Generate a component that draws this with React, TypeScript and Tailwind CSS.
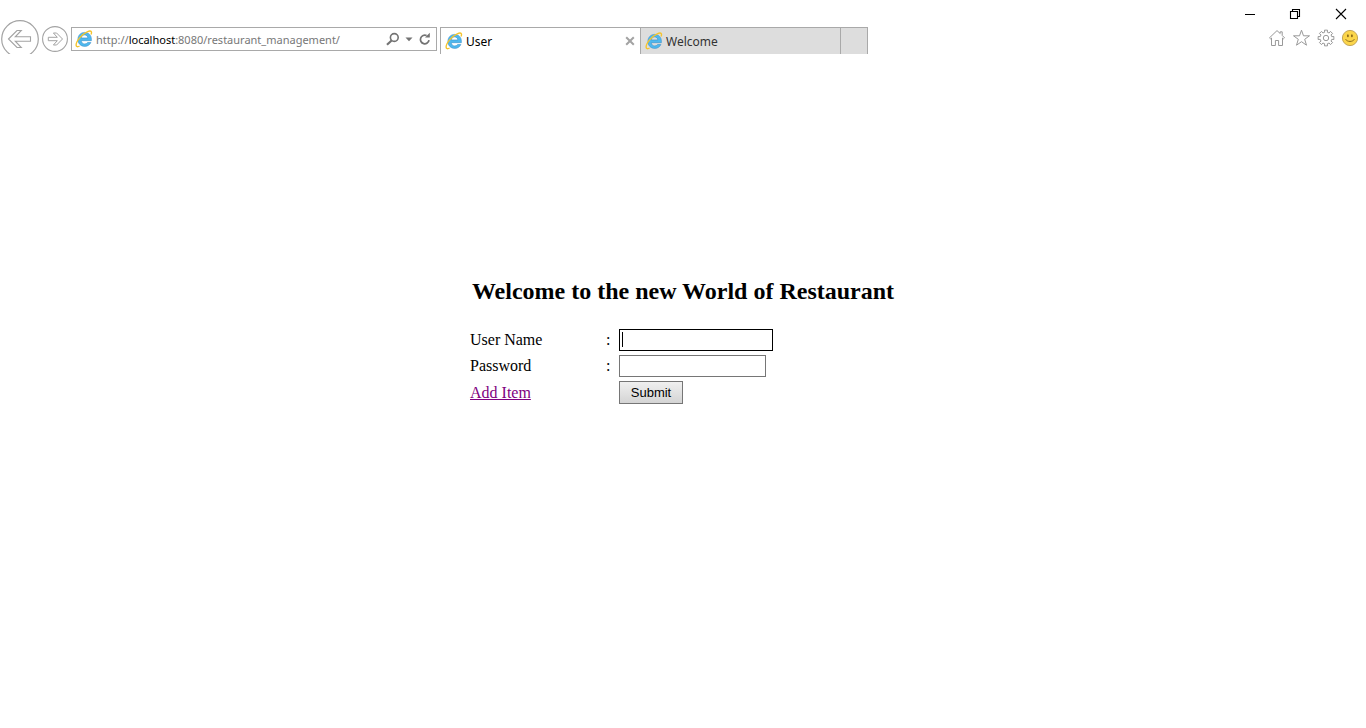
import React from 'react';

function IeLogo() {
  return (
    <svg width="18" height="18" viewBox="0 0 18 18" fill="none" aria-hidden="true" className="shrink-0">
      <path
        fillRule="evenodd"
        clipRule="evenodd"
        d="M9.6 2.4C13.7 2.4 16.4 5.2 16.4 9.2V10.7H6.2C6.4 12.6 7.8 13.9 9.8 13.9C11 13.9 12 13.4 12.6 12.5H15.9C14.9 14.9 12.7 16.4 9.7 16.4C5.7 16.4 2.9 13.5 2.9 9.4C2.9 5.3 5.7 2.4 9.6 2.4ZM6.3 7.9H12.8C12.6 6 11.4 4.9 9.6 4.9C7.9 4.9 6.6 6 6.3 7.9Z"
        fill="#4fb8ee"
        stroke="#2c86c4"
        strokeWidth="0.5"
      />
      <path
        d="M4.6 16C2.7 17.1 1.3 16.9 1.1 15.2C0.9 11.6 6.4 4.4 12.2 1.8C14.6 0.7 16.2 0.7 16.5 2.1C16.6 2.9 16.4 3.7 16 4.5"
        stroke="#f4c42e"
        strokeWidth="1.4"
      />
    </svg>
  );
}

function BackIcon() {
  return (
    <svg width="38" height="38" viewBox="0 0 38 38" fill="none" stroke="#a3a3a3" aria-hidden="true">
      <circle cx="19" cy="19" r="18.3" strokeWidth="1.2" />
      <path d="M7.5 19L16 10.5H20.3L14.3 16.8H29.5V21.2H14.3L20.3 27.5H16Z" strokeWidth="1.1" />
    </svg>
  );
}

function ForwardIcon() {
  return (
    <svg width="26" height="26" viewBox="0 0 26 26" fill="none" stroke="#a3a3a3" aria-hidden="true">
      <circle cx="13" cy="13" r="12.4" strokeWidth="1.1" />
      <path d="M20.5 13L14.6 7H11.4L15.3 11.3H6.3V14.7H15.3L11.4 19H14.6Z" />
    </svg>
  );
}

function AddressBar() {
  return (
    <div className="flex h-6 w-[366px] items-center border border-[#a9a9a9] bg-white px-[3px]">
      <IeLogo />
      <div
        role="textbox"
        aria-label="Address"
        contentEditable
        suppressContentEditableWarning
        spellCheck={false}
        className="ml-[3px] min-w-0 flex-1 whitespace-nowrap pt-0.5 text-[11px] text-[#777777] outline-none"
      >
        http://<span className="text-black">localhost</span>:8080/restaurant_management/
      </div>
      <button type="button" aria-label="Search" className="flex">
        <svg width="16" height="16" viewBox="0 0 16 16" fill="none" stroke="#737373" aria-hidden="true">
          <circle cx="9.3" cy="6.5" r="3.9" strokeWidth="1.6" />
          <path d="M6.6 9.5L2 13.7" strokeWidth="2.2" />
        </svg>
      </button>
      <button type="button" aria-label="Show address history" className="flex w-4 justify-center">
        <svg width="8" height="5" viewBox="0 0 8 5" fill="#737373" aria-hidden="true">
          <path d="M0.5 0.5H7.5L4 4.3Z" />
        </svg>
      </button>
      <button type="button" aria-label="Refresh" className="flex">
        <svg width="16" height="16" viewBox="0 0 16 16" fill="none" aria-hidden="true">
          <path d="M9.6 4.6A4.3 4.3 0 1 0 12 9.1" stroke="#737373" strokeWidth="1.7" />
          <path d="M8 6.4H12.8V1.8Z" fill="#737373" />
        </svg>
      </button>
    </div>
  );
}

function Tabs() {
  return (
    <div className="ml-[3px] flex h-[27px] text-xs">
      <div className="flex w-[200px] items-center border-l border-t border-[#a9a9a9] bg-white pl-1 pr-[5px]">
        <button type="button" className="flex min-w-0 flex-1 items-center gap-[3px] text-left text-black">
          <IeLogo />
          <span className="pt-0.5">User</span>
        </button>
        <button type="button" aria-label="Close tab">
          <svg width="10" height="10" viewBox="0 0 10 10" stroke="#a3a3a3" strokeWidth="2" aria-hidden="true">
            <path d="M1.2 1.2L8.8 8.8M8.8 1.2L1.2 8.8" />
          </svg>
        </button>
      </div>
      <button
        type="button"
        className="flex w-[200px] items-center gap-[3px] border-l border-t border-[#a9a9a9] bg-[#dddddd] pl-1 text-left text-[#333333]"
      >
        <IeLogo />
        <span className="pt-0.5">Welcome</span>
      </button>
      <button type="button" aria-label="New tab" className="w-7 border-x border-t border-[#a9a9a9] bg-[#dddddd]" />
    </div>
  );
}

function WindowControls() {
  return (
    <div className="flex h-7 items-center gap-[34px] pr-[19px]">
      <button type="button" aria-label="Minimize">
        <svg width="12" height="12" viewBox="0 0 12 12" stroke="#000000" aria-hidden="true">
          <path d="M2 6.5H12" />
        </svg>
      </button>
      <button type="button" aria-label="Restore">
        <svg width="12" height="12" viewBox="0 0 12 12" fill="none" stroke="#000000" strokeWidth="1.1" aria-hidden="true">
          <path d="M1.5 3.5H8.5V10.5H1.5Z" />
          <path d="M3.5 3.5V1.5H10.5V8.5H8.5" />
        </svg>
      </button>
      <button type="button" aria-label="Close window">
        <svg width="12" height="12" viewBox="0 0 12 12" stroke="#000000" strokeWidth="1.1" aria-hidden="true">
          <path d="M1 1L11 11M11 1L1 11" />
        </svg>
      </button>
    </div>
  );
}

const gearPath = Array.from({ length: 8 }, (_, i) => {
  const point = (radius: number, degrees: number) => {
    const angle = ((i * 45 + degrees) * Math.PI) / 180;
    return `${(9 + radius * Math.cos(angle)).toFixed(2)} ${(9 + radius * Math.sin(angle)).toFixed(2)}`;
  };
  return `${i === 0 ? 'M' : 'L'}${point(5.9, -13)}L${point(8, -11)}L${point(8, 11)}L${point(5.9, 13)}`;
}).join('') + 'Z';

function Toolbar() {
  return (
    <div className="flex h-[26px] items-start gap-[6px] pr-[7px] pt-px">
      <button type="button" aria-label="Home">
        <svg width="18" height="18" viewBox="0 0 18 18" fill="none" stroke="#999999" aria-hidden="true">
          <path d="M8 1.6L0.5 8.8L1.6 9.8L2.5 9V16.5H6.4V11.5H9.6V16.5H13.5V9L14.4 9.8L15.5 8.8L13.2 6.4V2.8H11.2V4.5Z" />
        </svg>
      </button>
      <button type="button" aria-label="Favorites">
        <svg width="18" height="18" viewBox="0 0 18 18" fill="none" stroke="#999999" aria-hidden="true">
          <path d="M8.5 1.2L10.5 6.8H16.5L11.7 10.3L13.5 16.2L8.5 12.7L3.5 16.2L5.3 10.3L0.5 6.8H6.5Z" />
        </svg>
      </button>
      <button type="button" aria-label="Tools">
        <svg width="18" height="18" viewBox="0 0 18 18" fill="none" stroke="#999999" aria-hidden="true">
          <path d={gearPath} />
          <circle cx="9" cy="9" r="2.7" />
        </svg>
      </button>
      <button type="button" aria-label="Send a smile">
        <svg width="18" height="18" viewBox="0 0 18 18" fill="none" aria-hidden="true">
          <circle cx="9" cy="9" r="7.6" fill="#fbd54a" stroke="#c4a658" />
          <ellipse cx="6.9" cy="6.8" rx="0.8" ry="1.5" fill="#7a5a14" />
          <ellipse cx="10.9" cy="6.8" rx="0.8" ry="1.5" fill="#7a5a14" />
          <path d="M4.6 10.2C6.2 13.2 11.8 13.2 13.4 10.2" stroke="#8a6a1c" />
        </svg>
      </button>
    </div>
  );
}

function BrowserHeader() {
  return (
    <header className="flex h-[54px] justify-between overflow-hidden font-['Noto_Sans','Open_Sans',sans-serif]">
      <div className="flex items-start">
        <button type="button" aria-label="Back" className="ml-px mt-5">
          <BackIcon />
        </button>
        <button type="button" aria-label="Forward" className="ml-[3px] mt-[26px]">
          <ForwardIcon />
        </button>
        <div className="ml-[3px] mt-[27px] flex">
          <AddressBar />
          <Tabs />
        </div>
      </div>
      <div className="flex flex-col items-end">
        <WindowControls />
        <Toolbar />
      </div>
    </header>
  );
}

function LoginForm() {
  return (
    <form
      className="mx-auto w-[426px] pt-[221px] text-base leading-5 text-black"
      onSubmit={(event) => event.preventDefault()}
    >
      <h1 className="whitespace-nowrap text-center text-2xl font-bold leading-8">Welcome to the new World of Restaurant</h1>
      <div className="mt-[22px] grid grid-cols-[136px_13px_1fr] items-center gap-y-1">
        <label htmlFor="username">User Name</label>
        <span>:</span>
        <div className="relative flex">
          <input
            id="username"
            type="text"
            className="h-[22px] w-[154px] border border-black bg-white px-[3px] text-[13px] outline-none"
          />
          <span className="absolute left-[3px] top-[3px] h-[15px] w-px bg-black" />
        </div>
        <label htmlFor="password">Password</label>
        <span>:</span>
        <input
          id="password"
          type="password"
          className="h-[22px] w-[147px] border border-[#767676] bg-white px-[3px] text-[13px] outline-none"
        />
        <a href="#add-item" className="justify-self-start text-[#800080] underline">
          Add Item
        </a>
        <span />
        <button
          type="submit"
          className="h-[23px] w-16 border border-[#767676] bg-linear-to-b from-[#f0f0f0] to-[#d4d4d4] font-['Liberation_Sans',Arial,sans-serif] text-[13px] leading-5"
        >
          Submit
        </button>
      </div>
    </form>
  );
}

export default function App() {
  return (
    <div className="min-h-screen bg-white font-['Liberation_Serif','Times_New_Roman',serif]">
      <BrowserHeader />
      <main>
        <LoginForm />
      </main>
    </div>
  );
}
